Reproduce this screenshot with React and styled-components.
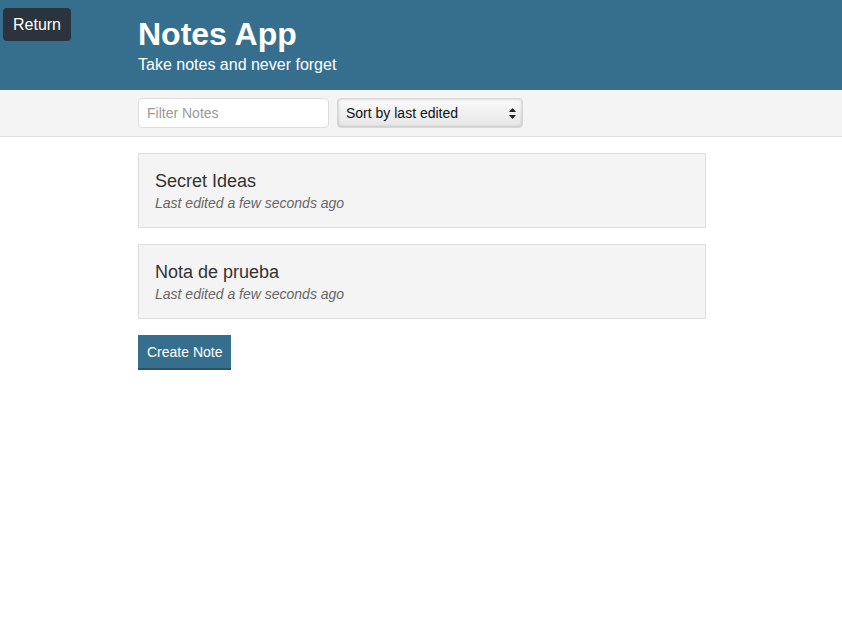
import React, { useState } from "react";
import styled, { createGlobalStyle } from "styled-components";

const GlobalStyle = createGlobalStyle`
  * { box-sizing: border-box; }
  body {
    margin: 0;
    font-family: "Liberation Sans", Arial, sans-serif;
    color: #333;
    background: #fff;
  }
`;

const ReturnButton = styled.button`
  position: absolute;
  top: 8px;
  left: 3px;
  width: 68px;
  height: 33px;
  background: #2b333c;
  color: #fff;
  border: 0;
  border-radius: 4px;
  font-family: inherit;
  font-size: 16px;
  cursor: pointer;
`;

const Header = styled.header`
  background: #366f8e;
  color: #fff;
  height: 90px;
  padding-top: 15px;
`;

const Container = styled.div`
  width: 568px;
  margin-left: 138px;
`;

const Title = styled.h1`
  margin: 0;
  font-size: 32px;
  line-height: 38px;
  font-weight: 700;
`;

const Subtitle = styled.h2`
  margin: 2px 0 0;
  font-size: 16px;
  font-weight: 400;
  line-height: 20px;
`;

const FilterBar = styled.div`
  background: #f4f4f4;
  border-bottom: 1px solid #dedede;
  height: 47px;
  padding-top: 8px;
`;

const FilterRow = styled(Container)`
  display: flex;
  gap: 8px;
`;

const Input = styled.input`
  width: 191px;
  height: 30px;
  border: 1px solid #ddd;
  border-radius: 4px;
  padding: 0 8px;
  font-family: inherit;
  font-size: 14px;
  color: #333;
  &::placeholder { color: #999; }
`;

const SelectBox = styled.div`
  position: relative;
  width: 186px;
  height: 30px;
  border-radius: 4px;
  background: linear-gradient(#fbfbfb, #e6e6e6);
  box-shadow: inset 0 0 3px rgba(0,0,0,0.25);
  border: 1px solid #d6d6d6;
  display: flex;
  align-items: center;
  padding-left: 8px;
  font-size: 14px;
  color: #111;
`;

const Arrows = styled.svg`
  position: absolute;
  right: 6px;
  top: 9px;
`;

const Notes = styled(Container)`
  padding-top: 16px;
  display: flex;
  flex-direction: column;
  gap: 16px;
`;

const Card = styled.div`
  height: 75px;
  background: #f4f4f4;
  border: 1px solid #dedede;
  padding: 16px 16px 0;
`;

const CardTitle = styled.p`
  margin: 0;
  font-size: 18px;
  line-height: 22px;
  color: #333;
`;

const CardMeta = styled.p`
  margin: 1px 0 0;
  font-size: 14px;
  font-style: italic;
  color: #666;
  line-height: 20px;
`;

const CreateButton = styled.button`
  align-self: flex-start;
  height: 35px;
  padding: 0 9px;
  background: #366f8e;
  color: #fff;
  border: 0;
  border-bottom: 2px solid #27536b;
  font-family: inherit;
  font-size: 14px;
  cursor: pointer;
`;

const notes = [
  { id: 1, title: "Secret Ideas" },
  { id: 2, title: "Nota de prueba" },
];

export default function App() {
  const [filter, setFilter] = useState("");
  return (
    <>
      <GlobalStyle />
      <ReturnButton>Return</ReturnButton>
      <Header>
        <Container>
          <Title>Notes App</Title>
          <Subtitle>Take notes and never forget</Subtitle>
        </Container>
      </Header>
      <FilterBar>
        <FilterRow>
          <Input
            placeholder="Filter Notes"
            value={filter}
            onChange={(e) => setFilter(e.target.value)}
          />
          <SelectBox>
            Sort by last edited
            <Arrows width="7" height="11" viewBox="0 0 7 11">
              <path d="M3.5 0 L7 4 L0 4 Z M3.5 11 L7 7 L0 7 Z" fill="#222" />
            </Arrows>
          </SelectBox>
        </FilterRow>
      </FilterBar>
      <Notes>
        {notes.map((n) => (
          <Card key={n.id}>
            <CardTitle>{n.title}</CardTitle>
            <CardMeta>Last edited a few seconds ago</CardMeta>
          </Card>
        ))}
        <CreateButton>Create Note</CreateButton>
      </Notes>
    </>
  );
}
